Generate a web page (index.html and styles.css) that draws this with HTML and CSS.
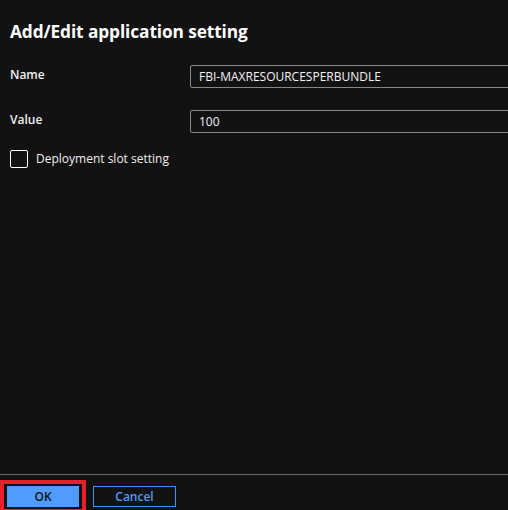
FILE: index.html
```html
<!DOCTYPE html>
<html lang="en">
<head>
<meta charset="utf-8">
<link rel="stylesheet" href="styles.css">
</head>
<body>
<div class="panel">
  <main class="content">
    <h1 class="title">Add/Edit application setting</h1>
    <div class="field">
      <label class="label">Name</label>
      <div class="input">FBI-MAXRESOURCESPERBUNDLE</div>
    </div>
    <div class="field">
      <label class="label">Value</label>
      <div class="input">100</div>
    </div>
    <div class="check-row">
      <span class="checkbox"></span>
      <span class="check-label">Deployment slot setting</span>
    </div>
  </main>
  <footer class="footer">
    <div class="highlight">
      <button class="btn btn-primary">OK</button>
    </div>
    <button class="btn btn-secondary">Cancel</button>
  </footer>
</div>
</body>
</html>
```
FILE: styles.css
```css
html, body {
  margin: 0;
  padding: 0;
  background: #121212;
  overflow: hidden;
}
body {
  font-family: "Open Sans", "Noto Sans", sans-serif;
  color: #ffffff;
}
.panel {
  height: 510px;
  display: flex;
  flex-direction: column;
}
.content {
  flex: 1;
  padding: 0 0 0 10px;
  overflow: hidden;
}
.title {
  margin: 0;
  padding-top: 20px;
  font-size: 17.3px;
  font-weight: 700;
  line-height: 24px;
  letter-spacing: -0.1px;
  height: 45px;
}
.field {
  display: grid;
  grid-template-columns: 180px 1fr;
  align-items: start;
  height: 45px;
}
.field + .field {
  height: 40px;
}
.label {
  font-size: 12px;
  font-weight: 600;
  line-height: 16px;
  padding-top: 2px;
  color: #f0f0f0;
}
.input {
  box-sizing: border-box;
  width: 400px;
  height: 23px;
  border: 1px solid #8a8886;
  border-radius: 2px;
  padding: 0 8px;
  font-size: 12px;
  line-height: 21px;
  color: #f3f3f3;
}
.check-row {
  display: flex;
  align-items: center;
  gap: 8px;
}
.checkbox {
  box-sizing: border-box;
  width: 18px;
  height: 18px;
  border: 1px solid #ffffff;
  border-radius: 2px;
}
.check-label {
  font-size: 12px;
  line-height: 18px;
  color: #f0f0f0;
}
.footer {
  height: 36px;
  border-top: 1px solid #666;
  display: flex;
  align-items: flex-start;
  gap: 7px;
  padding-top: 5px;
  box-sizing: border-box;
}
.highlight {
  border: 4px solid #e8202a;
  padding: 2px 3px;
  display: flex;
}
.btn {
  box-sizing: border-box;
  height: 21px;
  font-family: "Open Sans", "Noto Sans", sans-serif;
  font-size: 12px;
  font-weight: 600;
  line-height: 19px;
  padding: 0;
  border-radius: 0;
  cursor: pointer;
}
.btn-primary {
  width: 72px;
  background: #4f9bff;
  border: 1px solid #4f9bff;
  color: #141414;
}
.btn-secondary {
  margin-top: 6px;
  width: 83px;
  background: transparent;
  border: 1px solid #4a8ef0;
  color: #4f9bff;
}
```
